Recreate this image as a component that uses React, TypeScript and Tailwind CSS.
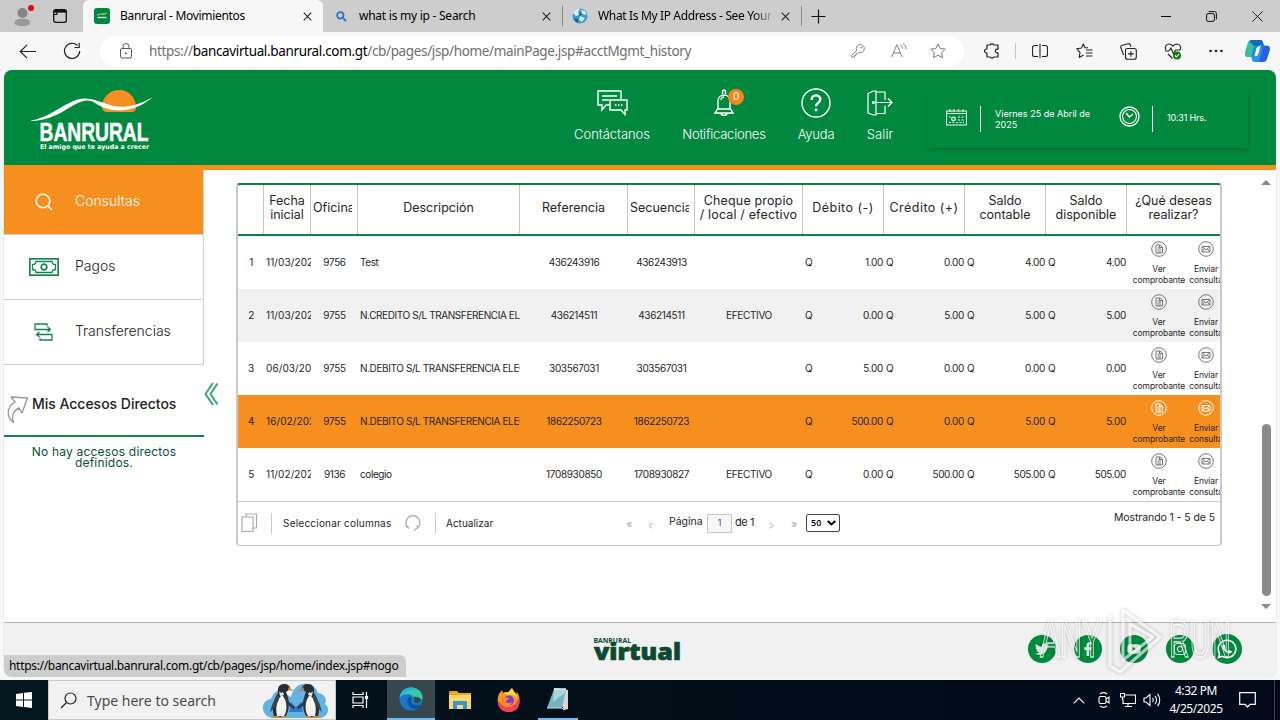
import React from "react";
import { FaTwitter, FaFacebookF, FaYoutube, FaInstagram, FaWhatsapp } from "react-icons/fa";

type Row = {
  n: number;
  date: string;
  office: string;
  desc: string;
  ref: string;
  seq: string;
  check: string;
  amounts: string[];
  active?: boolean;
};

const rows: Row[] = [
  { n: 1, date: "11/03/2025", office: "9756", desc: "Test", ref: "436243916", seq: "436243913", check: "", amounts: ["1.00", "0.00", "4.00", "4.00"] },
  { n: 2, date: "11/03/2025", office: "9755", desc: "N.CREDITO S/L TRANSFERENCIA ELEC", ref: "436214511", seq: "436214511", check: "EFECTIVO", amounts: ["0.00", "5.00", "5.00", "5.00"] },
  { n: 3, date: "06/03/2025", office: "9755", desc: "N.DEBITO S/L TRANSFERENCIA ELECT", ref: "303567031", seq: "303567031", check: "", amounts: ["5.00", "0.00", "0.00", "0.00"] },
  { n: 4, date: "16/02/2025", office: "9755", desc: "N.DEBITO S/L TRANSFERENCIA ELECT", ref: "1862250723", seq: "1862250723", check: "", amounts: ["500.00", "0.00", "5.00", "5.00"], active: true },
  { n: 5, date: "11/02/2025", office: "9136", desc: "colegio", ref: "1708930850", seq: "1708930827", check: "EFECTIVO", amounts: ["0.00", "500.00", "505.00", "505.00"] },
];

const COLS = "grid grid-cols-[26px_47px_47px_162px_108px_67px_108px_81px_81px_81px_81px_93px]";

function Close({ className = "" }: { className?: string }) {
  return (
    <svg className={"h-[9px] w-[9px] shrink-0 " + className} viewBox="0 0 9 9" fill="none" stroke="#222" strokeWidth="1.1">
      <path d="M.7.7l7.6 7.6M8.3.7L.7 8.3" />
    </svg>
  );
}

function TabBar() {
  return (
    <div className="flex h-8 shrink-0 items-center bg-[#cdcdcd] text-[12px] text-black">
      <div className="flex h-8 w-[83px] items-center rounded-br-md bg-[#cacaca]">
        <svg className="ml-[13px] h-[23px] w-[23px]" viewBox="0 0 23 23">
          <circle cx="9.500" cy="8" r="5" fill="#858585" />
          <path d="M1.500 18c0-3 3-4.200 8-4.200s7.500 1.200 7.500 4.200c0 1.800-3 3-7.500 3s-8-1.200-8-3z" fill="#999" />
          <circle cx="18" cy="3" r="3" fill="#e3000f" />
        </svg>
        <svg className="ml-[17px] h-[14px] w-[14px]" viewBox="0 0 14 14" fill="none" stroke="#111">
          <rect x=".7" y=".7" width="12.600" height="12.600" rx="2" strokeWidth="1.300" />
          <path d="M1 2.300h12" strokeWidth="2.600" />
          <path d="M3.800 1v5M1 5.500h3" strokeWidth="1.200" />
        </svg>
      </div>
      <div className="flex h-8 w-[240px] items-center rounded-t-md bg-[#f7f7f7]">
        <svg className="ml-[11px] h-4 w-4" viewBox="0 0 16 16">
          <rect width="16" height="16" rx="3" fill="#00853f" />
          <path d="M3 7.500c3-3 6 0 10-2.500" stroke="#fff" fill="none" strokeWidth=".7" />
          <path d="M7.500 6.300a2.200 2.200 0 014 0z" fill="#f78f1e" />
          <path d="M3.500 9.500h9" stroke="#d5eadc" strokeWidth="1.400" />
        </svg>
        <span className="ml-[10px] w-[183px] whitespace-nowrap tracking-[-0.32px]">Banrural - Movimientos</span>
        <Close />
      </div>
      <div className="flex w-[239px] items-center">
        <svg className="ml-[13px] h-[11px] w-[11px]" viewBox="0 0 11 11" fill="none" stroke="#2d76c4" strokeWidth="1.800">
          <circle cx="4.300" cy="4.300" r="3.200" />
          <path d="M6.700 6.700l3.500 3.500" />
        </svg>
        <span className="ml-[12px] w-[183px] whitespace-nowrap tracking-[-0.25px]">what is my ip - Search</span>
        <Close />
      </div>
      <div className="h-5 w-px bg-[#8d8d8d]" />
      <svg className="ml-[9px] h-4 w-4" viewBox="0 0 16 16">
        <circle cx="8" cy="8" r="7.500" fill="#3b9ac9" />
        <path d="M1 5c2-4 5-4.500 7-4L6 4 7 7 4 8zM9 2l4 1 1.500 4-4-1zM8 8l5 2-3 4-3-2z" fill="#d9eef5" />
        <path d="M2 10l4 1v4C4 14 3 13 2 10zM8 4l2 3-3 1z" fill="#1c5f92" />
      </svg>
      <span className="ml-[10px] w-[173px] whitespace-nowrap bg-linear-to-r from-black from-88% to-[#aaa] bg-clip-text text-transparent tracking-[-0.35px]">What Is My IP Address - See Your</span>
      <Close className="ml-[10px]" />
      <div className="ml-[11px] h-5 w-px bg-[#8d8d8d]" />
      <svg className="ml-[9px] h-[15px] w-[15px]" viewBox="0 0 15 15" stroke="#111" strokeWidth="1.200">
        <path d="M7.500.5v14M.5 7.500h14" />
      </svg>
      <div className="ml-auto flex items-center gap-[35px] pr-[17px]">
        <div className="h-px w-[10px] bg-black" />
        <svg className="h-[11px] w-[11px]" viewBox="0 0 11 11" fill="none" stroke="#111">
          <rect x=".6" y="2.600" width="7.800" height="7.800" rx="1.500" />
          <path d="M2.600.6h5.800a2 2 0 012 2v5.800" />
        </svg>
        <svg className="h-[11px] w-[11px]" viewBox="0 0 11 11" stroke="#111">
          <path d="M.5.5l10 10M10.500.5l-10 10" />
        </svg>
      </div>
    </div>
  );
}

function Toolbar() {
  return (
    <div className="flex h-[38px] shrink-0 items-center bg-[#f7f7f7]">
      <svg className="ml-[19px] h-[15px] w-[18px]" viewBox="0 0 18 15" fill="none" stroke="#222" strokeWidth="1.200">
        <path d="M17 7.500H1.500M8 .8L1.300 7.500 8 14.200" />
      </svg>
      <svg className="ml-[26px] h-[18px] w-[18px]" viewBox="0 0 18 18" fill="none" stroke="#222" strokeWidth="1.200">
        <path d="M14.500 3.500A7.600 7.600 0 1016.700 9M16.200.8v4.700h-4.700" />
      </svg>
      <div className="ml-[19px] flex h-[30px] w-[864px] items-center rounded-full bg-white">
        <svg className="ml-[20px] h-[16px] w-[12px]" viewBox="0 0 12 16" fill="none" stroke="#555">
          <rect x=".5" y="5.500" width="11" height="9.500" rx="1.500" />
          <path d="M3 5.500V3.500a3 3 0 016 0v2" />
          <circle cx="6" cy="10.300" r=".6" fill="#555" />
        </svg>
        <span className="ml-[17px] w-[684px] whitespace-nowrap text-[13.500px] tracking-[-0.35px] text-[#6e6e6e]">
          https://<span className="text-black">bancavirtual.banrural.com.gt</span>/cb/pages/jsp/home/mainPage.jsp#acctMgmt_history
        </span>
        <svg className="ml-[18px] h-[14px] w-[14px]" viewBox="0 0 14 14" fill="none" stroke="#888">
          <path d="M5.800 6.500a4 4 0 112 1.800L6.500 9.700H5v1.600H3.500V13H.7v-2z" />
          <circle cx="10.300" cy="3.600" r=".6" />
        </svg>
        <svg className="ml-[26px] h-[16px] w-[16px]" viewBox="0 0 16 16" fill="none" stroke="#808080">
          <path d="M.7 14L5.700 2h.4L11 14M2.500 10h6.800M9.500 2c1.300.8 2 2 2 3.500M12 .7c2 1.200 3.200 3 3.200 5.500" />
        </svg>
        <svg className="ml-[23px] h-[16px] w-[16px]" viewBox="0 0 16 16" fill="none" stroke="#777">
          <path d="M8 .9l2.200 4.600 5 .7-3.600 3.500.9 5L8 12.300l-4.500 2.400.9-5L.8 6.200l5-.7z" strokeLinejoin="round" />
        </svg>
      </div>
      <div className="ml-[20px] flex items-center">
        <svg className="h-[16px] w-[16px]" viewBox="0 0 16 16" fill="none" stroke="#222" strokeWidth="1.200">
          <path d="M3 2h3.200a2 2 0 013.600 0H14v4.200h-1.200a1.900 1.900 0 000 3.700H14V14H9.800a2 2 0 01-3.600 0H3v-4H2.500a2 2 0 010-4H3z" strokeLinejoin="round" />
        </svg>
        <div className="ml-[15px] h-4 w-px bg-[#c6c6c6]" />
        <svg className="ml-[16px] h-[14px] w-[16px]" viewBox="0 0 16 14" fill="none" stroke="#222" strokeWidth="1.100">
          <path d="M6 1.500H2.500a2 2 0 00-2 2v7a2 2 0 002 2H6M10 1.500h3.500a2 2 0 012 2v7a2 2 0 01-2 2H10M8 0v14" />
        </svg>
        <svg className="ml-[28px] h-[16px] w-[17px]" viewBox="0 0 17 16" fill="none" stroke="#222" strokeWidth="1.100">
          <path d="M12 4.800H9L7.300.9 5.500 5l-4.800.7L4 9.300 3.300 14.500 7.500 12M10 7h6.500M10 10h6.500M10 13h6.500" strokeLinejoin="round" />
        </svg>
        <svg className="ml-[27px] h-[17px] w-[17px]" viewBox="0 0 17 17" fill="none" stroke="#222" strokeWidth="1.100">
          <rect x="5.500" y="5.500" width="10.800" height="10.800" rx="2" />
          <path d="M10.900 8v5.800M8 10.900h5.800M3.500 12L.8 4.500a2 2 0 011.500-2.300L8 .7a2 2 0 012.400 1.300l.6 1.700" />
        </svg>
        <svg className="ml-[27px] h-[17px] w-[18px]" viewBox="0 0 18 17" fill="none" stroke="#222" strokeWidth="1.100">
          <path d="M2 7C-.5 2 5-1 9 3c4-4 9.500-1 7 4M1 8h4l2-3 2.500 6 2-4h5M4 11l4.500 4.500" />
          <circle cx="13" cy="12.500" r="4" fill="#107c10" stroke="none" />
          <path d="M11 12.500l1.500 1.500 2.500-3" stroke="#fff" />
        </svg>
        <svg className="ml-[27px] h-[4px] w-[14px]" viewBox="0 0 14 4" fill="#222">
          <circle cx="1.500" cy="2" r="1.300" /><circle cx="7" cy="2" r="1.300" /><circle cx="12.500" cy="2" r="1.300" />
        </svg>
        <svg className="ml-[22px] h-[24px] w-[25px]" viewBox="0 0 25 24">
          <path d="M7 1h8c2 0 2.500 1 3 3l1 3h-4c-2 0-3 1-3.500 3L10 15c-.6 2-1.500 3-4 3H3c-2.500 0-3.300-2-2.500-5L3 4c.7-2 2-3 4-3z" fill="#2487dc" />
          <path d="M1 10l2-6c.6-2 2-3 4-3h4L7.500 12 6 18H3c-2.500 0-3.500-3-2-8z" fill="#35c2a0" />
          <path d="M7 1h8c2 0 2.500 1 3 3l1 3H9L4 2z" fill="#126bb8" />
          <path d="M18 23h-8c-2 0-3-1-3.500-4L6 17c3 0 4-1 4.500-3L12 9c.7-2 2-2.500 4-2.500h6c2.500 0 3.300 2 2.500 4.500L22 19c-.8 3-2 4-4 4z" fill="#2a94ee" />
          <path d="M18 7h4c2.500 0 3.300 2 2.500 5l-2.300 7c-.7 3-2.200 4-4.200 4h-4z" fill="#2b61e0" />
          <path d="M14.500 8L12 16h-1.500l2-7z" fill="#fff" stroke="#fff" strokeWidth="1.500" />
        </svg>
      </div>
    </div>
  );
}

function NavItem({ label, cls, children }: { label: string; cls: string; children: React.ReactNode }) {
  return (
    <div className={"flex flex-col items-center " + cls}>
      <div className="flex h-[33px] items-center">{children}</div>
      <span className="mt-[7px] whitespace-nowrap text-[13px] leading-[16px]">{label}</span>
    </div>
  );
}

function Header() {
  return (
    <div className="flex h-[100px] shrink-0 border-b-[5px] border-[#f78f1e] bg-[#00883f] font-['Inter'] font-light text-white">
      <svg className="ml-[27px] mt-[18px] h-[68px] w-[126px]" viewBox="0 0 126 68">
        <path d="M71 19a17 17 0 0134 0c0 4-2 5-5 5H77c-4 0-6-2-6-5z" fill="#f78f1e" />
        <path d="M0 32.500C22 29 38 9.500 55 10.500c20 1 30 19 67-1.500-24 20-46 14-58 6C47 4 33 33 0 33z" fill="#fff" />
        <text x="8.500" y="53" textLength="109" lengthAdjust="spacingAndGlyphs" fill="#fff" stroke="#fff" strokeWidth=".5" fontSize="25" fontWeight="700" fontFamily="Liberation Sans, sans-serif">BANRURAL</text>
        <text x="9" y="60.500" textLength="109" lengthAdjust="spacingAndGlyphs" fill="#fff" fontSize="6.500" fontWeight="700" fontFamily="DejaVu Sans, sans-serif">El amigo que te ayuda a crecer</text>
      </svg>
      <div className="ml-[409px] flex pt-[16px]">
        <NavItem label="Contáctanos" cls="w-[92px] tracking-[-0.05px]">
          <svg className="h-[26px] w-[31px]" viewBox="0 0 31 26" fill="none" stroke="#fff" strokeWidth="1.400">
            <path d="M13 15H9l-4 5v-5H1V1h23v8M5 6h15M5 10h7M13 10h17v10h-2v4.500L24 20H13z" />
            <path d="M18 15h1.500M21 15h1.500M24 15h1.500" />
          </svg>
        </NavItem>
        <NavItem label="Notificaciones" cls="ml-[20px] w-[92px] tracking-[-0.22px]">
          <div className="relative">
            <svg className="h-[28px] w-[20px]" viewBox="0 0 20 28" fill="none" stroke="#fff" strokeWidth="1.400">
              <path d="M8.500 5V2.500a1.500 1.500 0 013 0V5M4 19v-7c0-8 12-8 12 0v7l3 5H1zM4 20h12M7 24.500c.5 2.500 5.500 2.500 6 0M7 11c0-2 1-3 3-3" />
            </svg>
            <span className="absolute left-[14px] top-0 flex h-4 w-4 items-center justify-center rounded-full bg-[#f7861f] text-[10px] font-normal">0</span>
          </div>
        </NavItem>
        <NavItem label="Ayuda" cls="ml-[18px] w-[56px] tracking-[-0.2px]">
          <svg className="h-[30px] w-[30px]" viewBox="0 0 30 30" fill="none" stroke="#fff">
            <circle cx="15" cy="15" r="14" strokeWidth="1.400" />
            <path d="M10.700 12c0-6 8.600-6 8.600-.7 0 3.700-4.300 3.500-4.300 7" strokeWidth="2.400" />
            <path d="M15 20.500v2.700" strokeWidth="2.600" />
          </svg>
        </NavItem>
        <NavItem label="Salir" cls="ml-[16px] w-[40px] tracking-[0.1px]">
          <svg className="h-[26px] w-[26px]" viewBox="0 0 26 26" fill="none" stroke="#fff" strokeWidth="1.200">
            <path d="M6.500 1H9v24H6.500L1 23V3.500zM9 2h9v8M18 15.500v8H9M7 12.500h17.500M21 8.500l4 4-4 4" strokeLinejoin="round" />
            <circle cx="6.500" cy="12.500" r="1" fill="#fff" />
          </svg>
        </NavItem>
      </div>
      <div className="ml-[28px] mt-[20px] flex h-[58px] w-[320px] items-center text-[9px] font-normal leading-[11px] shadow-[1px_2px_3px_rgba(0,70,30,.4)]">
        <svg className="ml-[18px] mb-[4px] h-[17px] w-[21px]" viewBox="0 0 21 17" fill="none" stroke="#e8fff0">
          <rect x=".6" y="2" width="19.800" height="14" />
          <path d="M1 4.500h19M4 0v3M8 0v3M12.500 0v3M17 0v3" />
          <path d="M12 8h6M12 11h6M3 8h2M3 13.500h15" strokeDasharray="2 1.500" />
          <circle cx="7.500" cy="10" r="1.800" strokeWidth="1.300" />
        </svg>
        <div className="ml-[13px] h-[26px] w-px bg-white" />
        <span className="ml-[14px] w-[110px] whitespace-nowrap tracking-[0.02px]">Viernes 25 de Abril de<br />2025</span>
        <svg className="mb-[5px] ml-[14px] h-[21px] w-[21px]" viewBox="0 0 21 21" fill="none" stroke="#fff">
          <circle cx="10.500" cy="10.500" r="9.500" strokeWidth="1.300" />
          <circle cx="10.500" cy="10.500" r="7" strokeWidth="1.100" />
          <path d="M7 7l3.500 4L14 8" strokeWidth="1.300" />
        </svg>
        <div className="ml-[12px] h-[26px] w-px bg-white" />
        <span className="mb-[3px] ml-[14px] whitespace-nowrap tracking-[-0.2px]">10:31 Hrs.</span>
      </div>
    </div>
  );
}

function Sidebar() {
  return (
    <div className="flex w-[224px] shrink-0 font-['Inter'] text-[#222]">
      <div className="w-[200px]">
        <div className="flex h-[65px] items-center border-b border-r border-[#cfcfcf] bg-[#f78f1e] text-[14px] font-light text-white">
          <svg className="ml-[31px] h-[18px] w-[18px]" viewBox="0 0 18 18" fill="none" stroke="#fff" strokeWidth="1.600">
            <circle cx="8" cy="8" r="6.800" /><path d="M13 13l4 4" />
          </svg>
          <span className="ml-[22px] pb-[3px]">Consultas</span>
        </div>
        <div className="flex h-[65px] items-center border-b border-r border-[#cfcfcf] text-[14px] font-light">
          <svg className="ml-[25px] h-[18px] w-[30px]" viewBox="0 0 30 18" fill="none" stroke="#17824b" strokeWidth="1.700">
            <rect x=".8" y=".8" width="28.400" height="16.400" />
            <path d="M7 3.500h16c0 2 1 3 3.500 3v5c-2.500 0-3.500 1-3.500 3H7c0-2-1-3-3.500-3v-5c2.500 0 3.500-1 3.500-3z" strokeWidth="1.300" />
            <circle cx="15" cy="9" r="2.800" />
          </svg>
          <span className="ml-[16px] pb-[3px]">Pagos</span>
        </div>
        <div className="flex h-[65px] items-center border-b border-r border-[#cfcfcf] text-[14px] font-light">
          <svg className="ml-[30px] h-[18px] w-[19px]" viewBox="0 0 19 18" fill="none" stroke="#17824b" strokeWidth="1.300">
            <path d="M13 3V1H1v5.500h15M13.500 4L16.500 6.500l-3 2.500M5.500 17H18v-5.500H2.500M5.500 9l-3 2.500 3 2.500M6 17v-2" />
          </svg>
          <span className="ml-[22px] pb-[3px] tracking-[-0.02px]">Transferencias</span>
        </div>
        <div className="flex h-[72px] items-center border-b-2 border-[#12804a]">
          <svg className="ml-[3px] mt-[18px] h-[29px] w-[22px]" viewBox="0 0 22 29" fill="none" stroke="#999" strokeWidth="1.400">
            <path d="M4 2l16.500 1L15 18l-3-5c-6 3-8 7-5.500 14.500C-1 22-.5 12 8 7z" strokeLinejoin="round" />
          </svg>
          <span className="ml-[3px] mt-[7px] whitespace-nowrap text-[14px] font-medium tracking-[-0.02px]">Mis Accesos Directos</span>
        </div>
        <div className="mt-[9px] text-center text-[12px] leading-[11px] tracking-[0.2px] text-[#0b5038]">
          No hay accesos directos<br />definidos.
        </div>
      </div>
      <svg className="mt-[212px] h-[24px] w-[15px]" viewBox="0 0 15 24" fill="none" stroke="#4aa880" strokeWidth="2.200">
        <path d="M9 1L1.500 12l7.500 11M13.500 1.500L6.500 12l7 10.500" />
      </svg>
    </div>
  );
}

function Head({ children, last = false }: { children?: React.ReactNode; last?: boolean }) {
  return (
    <div className={"flex items-center justify-center overflow-hidden border-[#c4c4c4] pb-[3px] text-center " + (last ? "" : "border-r")}>
      <span className="whitespace-nowrap">{children}</span>
    </div>
  );
}

function Actions({ active }: { active?: boolean }) {
  return (
    <div className={"flex overflow-hidden text-center text-[8.500px] leading-[11px] " + (active ? "[--ic:#fff]" : "[--ic:#777]")}>
      <div className="flex w-[64px] shrink-0 flex-col items-center pt-[5px]">
        <svg className="h-4 w-4" viewBox="0 0 16 16" fill="none" stroke="var(--ic)">
          <circle cx="8" cy="8" r="7.300" />
          <path d="M5 4h4l2.500 2v6H5zM6.500 7h3.500M6.500 9H10M6.500 11H10M8.500 4v2.500h3" />
        </svg>
        <span className="mt-[7px] tracking-[-0.1px]">Ver<br />comprobante</span>
      </div>
      <div className="flex w-[30px] shrink-0 flex-col items-center pt-[5px]">
        <svg className="h-4 w-4" viewBox="0 0 16 16" fill="none" stroke="var(--ic)">
          <circle cx="8" cy="8" r="7.300" />
          <path d="M4 5.500h8v5.500H4zM4 5.500L8 9l4-3.500M4 11l2.500-3M12 11L9.500 8" />
        </svg>
        <span className="mt-[7px] tracking-[-0.1px]">Enviar<br />consulta</span>
      </div>
    </div>
  );
}

function MovementsTable() {
  return (
    <div className="h-[363px] w-[986px] rounded-[4px] border-2 border-b-[1.5px] border-[#c9c9c9] border-t-[#12804a] font-['Inter'] text-[#262626]">
      <div className={COLS + " h-[51px] border-b-2 border-[#12804a] text-[12.500px] leading-[14px]"}>
        <Head />
        <Head>Fecha<br />inicial</Head>
        <div className="flex items-center overflow-hidden border-r border-[#c4c4c4] pb-[3px] pl-[2px]"><span className="w-[39px] overflow-hidden">Oficina</span></div>
        <Head>Descripción</Head>
        <Head>Referencia</Head>
        <div className="flex items-center overflow-hidden border-r border-[#c4c4c4] pb-[3px] pl-[2px]"><span className="w-[59px] overflow-hidden">Secuencia</span></div>
        <Head><span className="tracking-[0.15px]">Cheque propio<br />/ local / efectivo</span></Head>
        <Head><span className="tracking-[0.45px]">Débito (-)</span></Head>
        <Head><span className="tracking-[0.45px]">Crédito (+)</span></Head>
        <Head>Saldo<br />contable</Head>
        <Head>Saldo<br />disponible</Head>
        <Head last>¿Qué deseas<br />realizar?</Head>
      </div>
      {rows.map((r) => (
        <div
          key={r.n}
          className={COLS + " h-[53px] items-stretch whitespace-nowrap text-[10px] leading-[53px] tracking-[-0.35px] " + (r.active ? "bg-[#f78f1e]" : r.n === 2 ? "bg-[#f1f1f1]" : "bg-white")}
        >
          <div className="text-center">{r.n}</div>
          <div className="ml-[2px] overflow-hidden tracking-[0.1px]">{r.date}</div>
          <div className="text-center">{r.office}</div>
          <div className="ml-[2px] overflow-hidden tracking-[-0.4px]">{r.desc}</div>
          <div className="text-center">{r.ref}</div>
          <div className="text-center">{r.seq}</div>
          <div className="text-center">{r.check}</div>
          {r.amounts.map((a, i) => (
            <div key={i} className="flex justify-between pl-[2px] pr-[1px]">
              <span>Q</span><span>{a}</span>
            </div>
          ))}
          <Actions active={r.active} />
        </div>
      ))}
      <div className="flex h-[43px] items-center border-t border-[#c9c9c9] text-[10px]">
        <svg className="ml-[3px] h-[20px] w-[17px]" viewBox="0 0 17 20" fill="none" stroke="#aaa" strokeWidth="1.200">
          <path d="M5 4V1h10.500v14H12M1 4h11v14.500H1z" />
        </svg>
        <div className="ml-[13px] h-[21px] w-px bg-[#c9c9c9]" />
        <span className="ml-[11px] w-[120px] whitespace-nowrap tracking-[0.22px]">Seleccionar columnas</span>
        <svg className="ml-[1px] h-[18px] w-[18px]" viewBox="0 0 18 18" fill="none" stroke="#aaa" strokeWidth="1.300">
          <path d="M5 14.500A7 7 0 1113.500 14M1.500 11.500L5 14.500M10 16.500l3.500-2.500-.5-3" />
        </svg>
        <div className="ml-[13px] h-[21px] w-px bg-[#c9c9c9]" />
        <span className="ml-[10px] w-[180px]">Actualizar</span>
        <span className="mt-[2px] w-[22px] text-[11px] text-[#aaa]">«</span>
        <svg className="mr-[16px] mt-[4px] h-[7px] w-[5px]" viewBox="0 0 5 7" fill="none" stroke="#aaa"><path d="M4.500.5L1 3.500l3.500 3" /></svg>
        <span className="mb-[2px] w-[38px] text-[10.500px]">Página</span>
        <span className="flex h-[19px] w-[25px] items-center justify-center border border-[#c4c4c4] bg-[#f7f7f7] text-[9px] text-[#555]">1</span>
        <span className="mb-[2px] ml-[3px] w-[34px] text-[11px] tracking-[-0.4px]">de 1</span>
        <svg className="mr-[17px] mt-[4px] h-[7px] w-[5px]" viewBox="0 0 5 7" fill="none" stroke="#aaa"><path d="M.5.5L4 3.500l-3.500 3" /></svg>
        <span className="mt-[2px] w-[15px] text-[11px] text-[#aaa]">»</span>
        <span className="flex h-[18px] w-[34px] items-center rounded-[2px] border border-[#444] pl-1 font-['Open_Sans'] text-[9px] font-semibold text-black">
          50
          <svg className="ml-[6px] h-[6px] w-[9px]" viewBox="0 0 9 6" fill="none" stroke="#000" strokeWidth="2"><path d="M.7 1l3.800 3.500L8.300 1" /></svg>
        </span>
        <span className="mb-[10px] ml-auto mr-[5px] text-[10.500px] tracking-[-0.08px]">Mostrando 1 - 5 de 5</span>
      </div>
    </div>
  );
}

function Social({ children }: { children: React.ReactNode }) {
  return <div className="flex h-[28px] w-[28px] items-center justify-center rounded-full bg-[#008a3e] text-[14px] text-[#ddefe3]">{children}</div>;
}

function Footer() {
  return (
    <div className="relative flex h-[55px] shrink-0 border-t border-[#b3b3b3] bg-[#f1f1f1]">
      <div className="ml-[589px] mt-[13px] h-[28px] w-[92px]">
        <svg className="block h-[28px] w-[92px]" viewBox="0 0 92 28">
          <text x=".5" y="7" textLength="37.500" lengthAdjust="spacingAndGlyphs" fontSize="7.500" fontWeight="700" fontFamily="Open Sans, sans-serif" fill="#0c4a2f">BANRURAL</text>
          <text x="1" y="23.500" textLength="87" lengthAdjust="spacingAndGlyphs" fontSize="23" fontWeight="800" fontFamily="Open Sans, sans-serif" fill="#0c4a2f" stroke="#0c4a2f" strokeWidth=".7">virtual</text>
        </svg>
      </div>
      <div className="ml-auto mr-[33px] mt-[12px] flex h-[28px] gap-[18px] pr-[1px]">
        <Social><FaTwitter /></Social>
        <Social><FaFacebookF /></Social>
        <Social><FaYoutube /></Social>
        <Social><FaInstagram /></Social>
        <div className="-mt-[1px] flex h-[30px] w-[30px] items-center justify-center rounded-full bg-[#008a3e] text-[22px] text-white"><FaWhatsapp /></div>
      </div>
      <div className="absolute bottom-0 left-0 flex h-[22px] w-[402px] items-center rounded-tr-md bg-[#cdcdcd] pl-[5px] text-[12px] text-black">
        <span className="whitespace-nowrap tracking-[-0.31px]">https://bancavirtual.banrural.com.gt/cb/pages/jsp/home/index.jsp#nogo</span>
      </div>
      <svg className="absolute bottom-[2px] right-[38px] h-[68px] w-[200px] opacity-80" viewBox="0 0 200 68" fill="none" stroke="#fff">
        <g className="drop-shadow-[0_0_2px_rgba(0,0,0,.35)]">
          <text x="2" y="50" textLength="62" lengthAdjust="spacingAndGlyphs" fontSize="52" fontFamily="Liberation Sans, sans-serif" strokeWidth="1.300" fill="#fff" fillOpacity=".15">ANY</text>
          <text x="131" y="50" textLength="62" lengthAdjust="spacingAndGlyphs" fontSize="52" fontFamily="Liberation Sans, sans-serif" strokeWidth="1.300" fill="#fff" fillOpacity=".15">RUN</text>
          <path d="M72 9v50l10 6 40-35L85 3v50l30-23L92 17v28" strokeWidth="3" strokeLinejoin="round" strokeOpacity=".8" />
        </g>
      </svg>
    </div>
  );
}

function Penguin({ flip }: { flip?: boolean }) {
  return (
    <g transform={flip ? "translate(68 0) scale(-1 1)" : undefined}>
      <path d="M12 35c-2-8-1-18 4-24-1-6 2-9 6-9s6 2 6 5l-4 3c4 8 4 19-1 25z" fill="#262e38" />
      <path d="M15 34c-2-9 0-17 5-21 5 5 6 15 2 21z" fill="#f4f4ef" />
      <path d="M16 12c-4 6-6 10-8 18 4-3 8-8 9-14z" fill="#3a4450" />
      <path d="M24 13c1 5 4 9 9 12l-1 2c-5-2-8-6-9-11z" fill="#313b47" />
      <path d="M17 9c1 2 3 2 4 1l1 3-4 1z" fill="#e9e6dc" />
      <path d="M26 5l6 4-6-1z" fill="#c86b35" />
      <path d="M11 34h6v2h-7zM19 34h5v2h-5z" fill="#d68a3a" />
    </g>
  );
}

function Taskbar() {
  return (
    <div className="flex h-[40px] shrink-0 items-center bg-linear-to-r from-[#03161d] via-[#020e18] to-[#000a1a] text-white">
      <div className="flex h-full w-12 items-center justify-center">
        <svg className="h-4 w-4" viewBox="0 0 16 16" fill="#fff"><path d="M0 2l7-1v6.500H0zM8 .8L16 0v7.500H8zM0 8.500h7V15l-7-1zM8 8.500h8V16l-8-1z" /></svg>
      </div>
      <div className="flex h-full w-[288px] items-center border border-[#c8c8c8] bg-[#f2f2f2]">
        <svg className="ml-[11px] h-[17px] w-[17px]" viewBox="0 0 17 17" fill="none" stroke="#222" strokeWidth="1.200">
          <circle cx="10.500" cy="6.500" r="5.500" /><path d="M6.500 10.500L1 16" />
        </svg>
        <span className="ml-[10px] w-[175px] text-[14px] text-[#4a4a4a]">Type here to search</span>
        <svg className="h-[37px] w-[70px]" viewBox="0 0 70 37">
          <path d="M10 36C-2 34-2 18 9 17c2-5 4-8 8-8l12 6C32-2 52-2 56 11c8 1 9 8 7 11 6 4 3 13-5 14z" fill="#62b3e4" />
          <path d="M27 30l2-10 5 5 5-5 2 10z" fill="#2c7bd6" />
          <Penguin /><Penguin flip />
        </svg>
      </div>
      <div className="flex h-full w-[49px] items-center justify-center">
        <svg className="h-[16px] w-[17px]" viewBox="0 0 17 16" fill="none" stroke="#fff" strokeWidth="1.200">
          <path d="M1 0v2.500h10V0M1 16v-2.500h10V16M1 5h10v6H1zM14.500 0v16" /><path d="M13.500 4.500h2v2h-2z" fill="#fff" />
        </svg>
      </div>
      <div className="ml-[2px] flex h-full w-[48px] items-center justify-center border-b-2 border-[#76b9ed] bg-[#36474e]">
        <svg className="h-6 w-6" viewBox="0 0 24 24">
          <circle cx="12" cy="12" r="11.500" fill="#1577c9" />
          <path d="M.7 11C1.500 4 6 .5 12 .5c7 0 11.500 4.500 11.500 9.500 0 4-3 6-6 6-2.500 0-3.500-1-3-2 .7-1 1.500-5-3.500-6.500C6.500 6.500 2 8 .7 11z" fill="#39c9a4" />
          <path d="M.7 11C1.500 4 6 .5 12 .5c3 0 6 1 8 3-6-2-14 0-19.300 7.500z" fill="#28b4dd" />
          <path d="M9 11c-2 5 1 11 8 11 2.500-.5 4.500-3 5-4.500-5 2.500-11 0-10-6 .2-2-1.500-2.500-3-.5z" fill="#0c4f9e" />
          <path d="M14.500 14c.7-1 .7-2.500 0-4 3-1 7 1 8 3-1 2.500-3 3-5 3s-3.500-1-3-2z" fill="#36474e" />
        </svg>
      </div>
      <div className="flex h-full w-[49px] items-center justify-center">
        <svg className="h-[19px] w-[22px]" viewBox="0 0 22 19">
          <path d="M0 1.500C0 .5.500 0 1.500 0H8l2 2h12v5H0z" fill="#e9a820" />
          <path d="M0 4h22v14H0z" fill="#ffd768" /><path d="M4 18v-8h14v8h-4v-4H8v4z" fill="#3c93d3" /><path d="M8 14h6v4H8z" fill="#f5d988" />
        </svg>
      </div>
      <div className="flex h-full w-[49px] items-center justify-center">
        <svg className="h-6 w-6" viewBox="0 0 24 24">
          <path d="M2 6l3-4 1 3c2-1 4-1 5-.5L15 0c1 3 3 4 4 6l1-2c6 9 1 20-8 20S-2 14 2 6z" fill="#ff9527" />
          <path d="M1 13c3 2 4 6 10 6s9-4 10-9c4 7-1 14-9 14C5 24 0 19 1 13z" fill="#f53d54" />
          <path d="M6 5c2-1 4-1 5-.5L15 0c1 3 5 5 5 11-2-4-6-5-9-4z" fill="#ffd53c" />
          <circle cx="12" cy="12.500" r="5" fill="#7a3ed0" /><path d="M5 9c3-1 4 1 7 1-1 3-3 2-3 4 2 2 5 1 6 0-2 7-11 4-10-5z" fill="#ff8423" />
        </svg>
      </div>
      <div className="ml-[5px] flex h-full w-[40px] items-center justify-center border-b-2 border-[#76b9ed]">
        <svg className="h-[24px] w-[24px]" viewBox="0 0 24 24">
          <path d="M8 1l14 2v19l-4 1z" fill="#d9d6cd" /><path d="M8 2h12l-4 19H1z" fill="#75b3c2" /><path d="M8 2h12l-1 4-12 9z" fill="#a9d6dd" />
          <path d="M8 2h12" stroke="#eef" strokeWidth="1.500" /><path d="M1 21h15l2 2" stroke="#cde" fill="none" />
        </svg>
      </div>
      <div className="ml-auto flex h-full items-center">
        <svg className="h-[7px] w-[12px]" viewBox="0 0 12 7" fill="none" stroke="#fff" strokeWidth="1.200"><path d="M.7 6.300L6 1l5.300 5.300" /></svg>
        <svg className="ml-[13px] h-[16px] w-[12px]" viewBox="0 0 12 16" fill="none" stroke="#fff" strokeWidth="1.100">
          <rect x="1" y="4.500" width="7" height="7" rx="1.500" /><path d="M8 7l3-2v6L8 9M2 2c2-1.500 5-1.500 7 0M2 14c2 1.500 5 1.500 7 0" />
        </svg>
        <svg className="ml-[10px] h-[14px] w-[16px]" viewBox="0 0 16 14" fill="none" stroke="#fff" strokeWidth="1.100">
          <path d="M5.500 2H15.500v8.500H3V6M8 10.500v3M5 13.500h7M.5.5h4v3.500h-4zM2.500 4v3" />
        </svg>
        <svg className="ml-[7px] h-[14px] w-[18px]" viewBox="0 0 18 14" fill="none" stroke="#fff" strokeWidth="1.100">
          <path d="M1 5v4h2l4 3.500v-11L3 5zM9.500 5c1 1 1 3 0 4M12 3c2 2 2 6 0 8M14.500 1c3 3 3 9 0 12" />
        </svg>
        <div className="ml-[7px] w-[56px] text-center text-[12px] leading-[18px] tracking-[-0.42px]">4:32 PM<br />4/25/2025</div>
        <svg className="ml-[15px] h-[16px] w-[17px]" viewBox="0 0 17 16" fill="none" stroke="#fff" strokeWidth="1.200"><path d="M.7.7h15.600v11.600H11L8.500 15 6 12.300H.7z" /></svg>
        <div className="ml-[18px] h-full w-px bg-[#33404b]" />
        <div className="w-[5px]" />
      </div>
    </div>
  );
}

export default function App() {
  return (
    <div className="flex h-[720px] w-[1280px] flex-col overflow-hidden bg-[#f7f7f7] font-['Noto_Sans','Open_Sans',sans-serif]">
      <TabBar />
      <Toolbar />
      <div className="mx-1 flex h-[607px] shrink-0 flex-col overflow-hidden rounded-[8px] bg-white shadow-[0_0_1px_#999]">
        <Header />
        <div className="flex h-[452px] shrink-0">
          <Sidebar />
          <div className="ml-[8px] pt-[13px]">
            <MovementsTable />
          </div>
          <div className="ml-auto mr-[4px] flex w-[12px] flex-col items-center pt-[10px]">
            <div className="h-0 w-0 border-x-[5px] border-b-[5px] border-x-transparent border-b-[#8a8a8a]" />
            <div className="mt-[239px] h-[172px] w-[9px] rounded-full bg-[#8a8a8a]" />
            <div className="mt-[8px] h-0 w-0 border-x-[5px] border-t-[5px] border-x-transparent border-t-[#8a8a8a]" />
          </div>
        </div>
        <Footer />
      </div>
      <div className="h-[3px] shrink-0 bg-[#f5f5f5]" />
      <Taskbar />
    </div>
  );
}
